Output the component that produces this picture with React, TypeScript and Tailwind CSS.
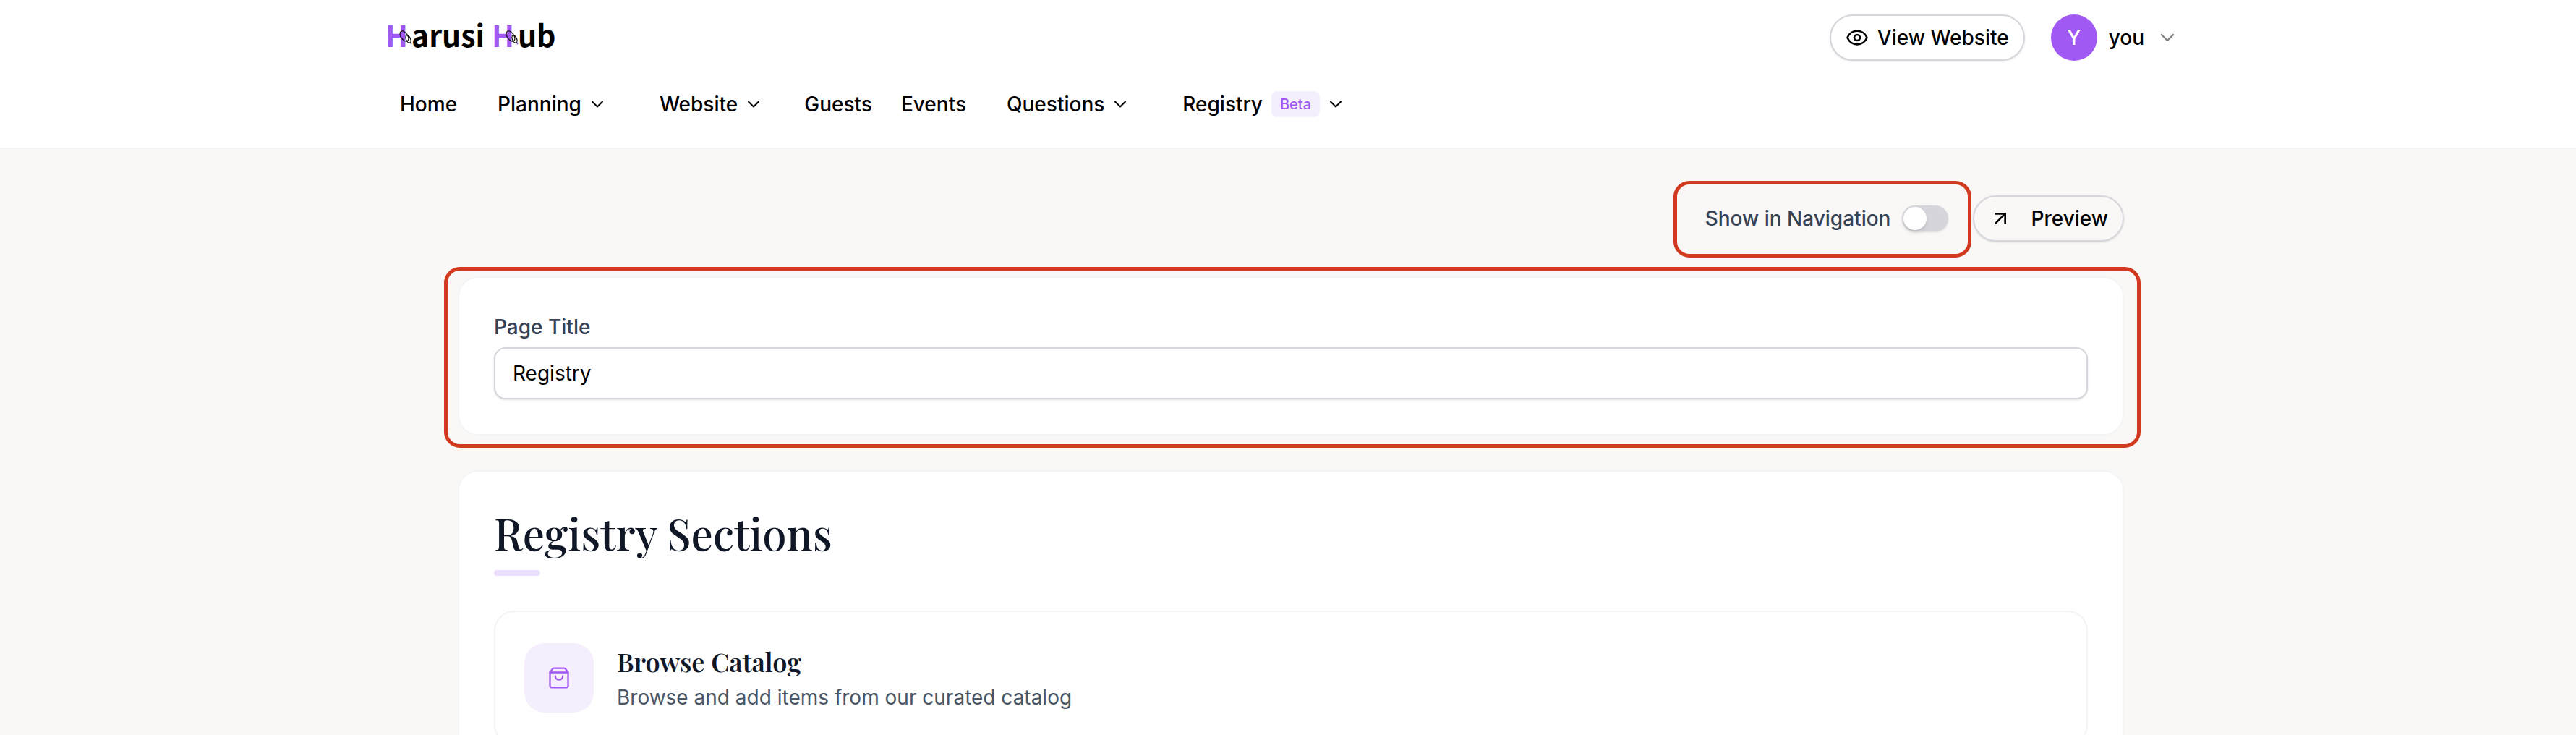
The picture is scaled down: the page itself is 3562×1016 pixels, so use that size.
import { ArrowUpRight, ChevronDown, Eye } from "lucide-react";
import { useState } from "react";

function LogoH() {
  return (
    <span className="relative block w-9 text-[#a05af3]">
      H
      <svg
        aria-hidden="true"
        className="absolute top-5 left-4 size-[22px]"
        viewBox="0 0 22 22"
        fill="none"
        stroke="#111"
        strokeWidth="1.3"
      >
        <ellipse cx="10" cy="10" rx="4.6" ry="8" transform="rotate(-35 10 10)" />
        <ellipse cx="15.5" cy="14" rx="3" ry="5.5" transform="rotate(-25 15.5 14)" />
        <circle cx="19.5" cy="20.5" r="1" fill="#a05af3" stroke="none" />
      </svg>
    </span>
  );
}

function Logo() {
  return (
    <a
      href="#"
      aria-label="Harusi Hub"
      className="flex font-['Noto_Sans_CJK_SC','Noto_Sans',sans-serif] text-[41px] leading-[54px] font-bold text-black"
    >
      <LogoH />
      <span className="mr-[10px]">arusi</span>
      <LogoH />
      <span>ub</span>
    </a>
  );
}

function NavLink({ label }: { label: string }) {
  return (
    <a href="#" className="px-5">
      {label}
    </a>
  );
}

function NavMenu({ label, badge }: { label: string; badge?: string }) {
  return (
    <button type="button" className="flex items-center gap-2 px-9 font-medium">
      {label}
      {badge && (
        <span className="ml-1 rounded-lg bg-[#f4eefd] px-3 text-[20px] leading-9 font-medium text-[#a05af3]">
          {badge}
        </span>
      )}
      <ChevronDown className="size-7" strokeWidth={1.75} />
    </button>
  );
}

function Header() {
  return (
    <header className="border-b-2 border-gray-100 bg-white pl-2">
      <div className="mx-auto max-w-[2560px] px-7">
        <div className="flex items-start justify-between pt-5 pr-6">
          <Logo />
          <div className="flex items-center gap-9">
            <a
              href="#"
              className="flex h-16 items-center gap-3 rounded-full border-2 border-[#d6d5dc] px-5 shadow-sm"
            >
              <Eye className="size-8" />
              View Website
            </a>
            <button type="button" className="flex items-center gap-4 font-medium">
              <span className="flex size-16 items-center justify-center rounded-full bg-[#a05af3] text-white">
                Y
              </span>
              you
              <ChevronDown className="size-8 text-[#808080]" strokeWidth={1.75} />
            </button>
          </div>
        </div>
        <nav className="flex h-[120px] items-center">
          <NavLink label="Home" />
          <NavMenu label="Planning" />
          <NavMenu label="Website" />
          <NavLink label="Guests" />
          <NavLink label="Events" />
          <NavMenu label="Questions" />
          <NavMenu label="Registry" badge="Beta" />
        </nav>
      </div>
    </header>
  );
}

function Toolbar() {
  const [shown, setShown] = useState(false);
  return (
    <div className="flex items-center justify-end">
      <div className="relative mr-[34px] text-gray-700">
        <label className="flex items-center gap-4">
          Show in Navigation
          <input
            type="checkbox"
            role="switch"
            checked={shown}
            onChange={(e) => setShown(e.target.checked)}
            className="h-9 w-16 appearance-none rounded-full bg-[#d6d5dc] p-[2px] shadow-sm before:block before:size-8 before:rounded-full before:bg-white before:shadow-md checked:bg-[#a05af3] checked:before:ml-7"
          />
        </label>
        <span className="pointer-events-none absolute -top-8 -right-8 -bottom-[34px] -left-11 rounded-[22px] border-5 border-[#d23a20]" />
      </div>
      <a
        href="#"
        className="flex h-16 items-center gap-[26px] rounded-full border-2 border-[#d6d5dc] px-5 shadow-sm"
      >
        <ArrowUpRight className="size-8" />
        Preview
      </a>
    </div>
  );
}

function BagIcon() {
  return (
    <svg
      aria-hidden="true"
      className="size-8"
      viewBox="0 0 32 32"
      fill="none"
      stroke="currentColor"
      strokeWidth="2.3"
      strokeLinecap="round"
      strokeLinejoin="round"
    >
      <path d="M3.5 8.5V27a2.3 2.3 0 0 0 2.3 2.3h20.4a2.3 2.3 0 0 0 2.3-2.3V8.5" />
      <path d="M3.5 8.5 6.8 3.8A2.3 2.3 0 0 1 8.7 2.7h14.6a2.3 2.3 0 0 1 1.9 1.1l3.3 4.7Z" />
      <path d="M21.2 13.5a5.2 5.2 0 0 1-10.4 0" />
    </svg>
  );
}

export default function App() {
  const [title, setTitle] = useState("Registry");
  return (
    <div className="h-screen overflow-hidden bg-[#f9f8f6] font-[Inter,sans-serif] text-[28px] leading-10 font-medium text-black">
      <Header />
      <main className="pt-16 pl-2">
        <div className="mx-auto flex max-w-[2304px] flex-col gap-12">
          <Toolbar />

          <section className="relative rounded-[28px] border-2 border-gray-100 bg-white p-12">
            <label htmlFor="page-title" className="block text-gray-700">
              Page Title
            </label>
            <input
              id="page-title"
              type="text"
              value={title}
              onChange={(e) => setTitle(e.target.value)}
              className="mt-2 block h-[72px] w-full rounded-2xl border-2 border-[#d6d5dc] bg-white px-6 font-normal shadow-sm"
            />
            <span className="pointer-events-none absolute -top-[15px] -right-[25px] -bottom-[19px] -left-[21px] rounded-[22px] border-5 border-[#d23a20]" />
          </section>

          <section className="rounded-[28px] border-2 border-gray-100 bg-white p-12">
            <h1 className="font-['Playfair_Display','Liberation_Serif',serif] text-[60px] leading-[72px] text-gray-900">
              Registry Sections
            </h1>
            <div className="mt-4 h-2 w-16 rounded-full bg-[#ecdefd]" />
            <a
              href="#"
              className="mt-12 flex items-center gap-8 rounded-[28px] border-2 border-gray-100 p-10"
            >
              <span className="flex size-24 items-center justify-center rounded-[28px] bg-[#f4eefd] text-[#a05af3]">
                <BagIcon />
              </span>
              <span className="block pb-[2px]">
                <span className="block font-['Playfair_Display','Liberation_Serif',serif] text-[36px] leading-[56px] font-semibold text-gray-900">
                  Browse Catalog
                </span>
                <span className="block leading-[44px] font-normal text-gray-600">
                  Browse and add items from our curated catalog
                </span>
              </span>
            </a>
          </section>
        </div>
      </main>
    </div>
  );
}
